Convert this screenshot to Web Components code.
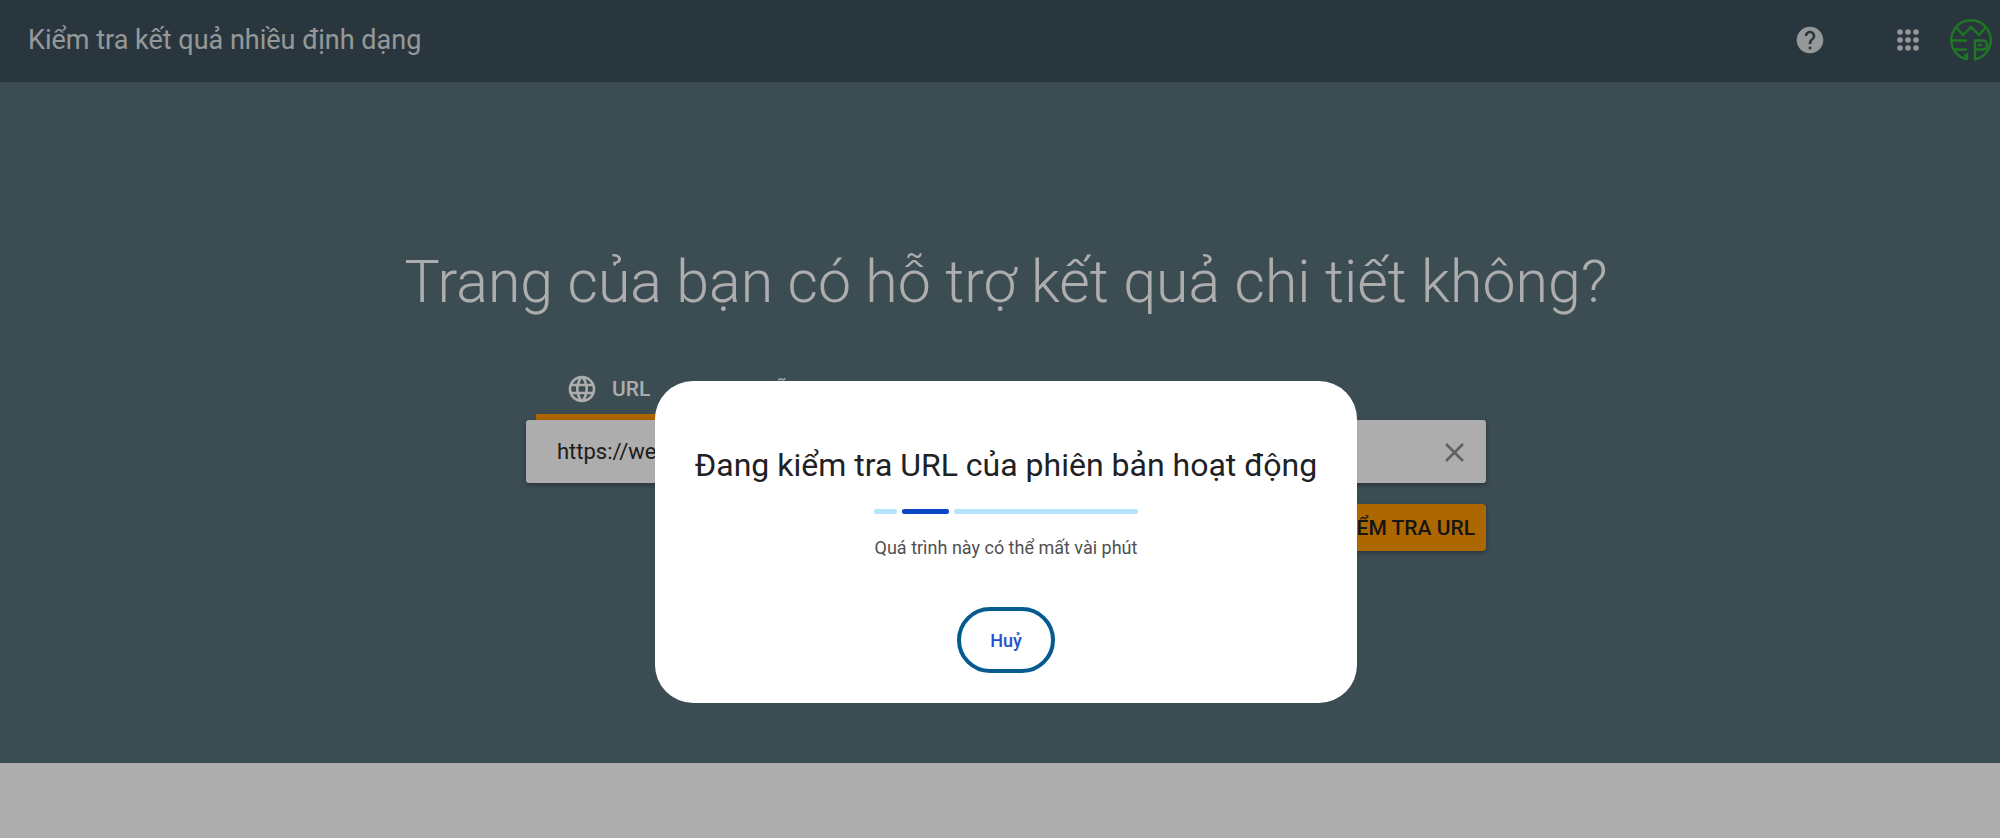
<!DOCTYPE html>
<html lang="vi">
<head>
<meta charset="utf-8">
<title>Kiểm tra kết quả nhiều định dạng</title>
<style>
    html, body {
        margin: 0;
        min-height: 100%;
    }

    body {
        background: #fff;
        font-family: Roboto, "Noto Sans", sans-serif;
    }
</style>
</head>
<body>

<test-page>
    <app-header slot="header" label="Kiểm tra kết quả nhiều định dạng"></app-header>
    <test-hero slot="hero" label="Trang của bạn có hỗ trợ kết quả chi tiết không?">
        <url-form value="https://webtest.vn"></url-form>
    </test-hero>
    <progress-dialog slot="overlay" label="Đang kiểm tra URL của phiên bản hoạt động">
        Quá trình này có thể mất vài phút
    </progress-dialog>
</test-page>

<script>
function makeTemplate(html) {
    const template = document.createElement('template');
    template.innerHTML = html;
    return template;
}

const templatePage = makeTemplate(`
<style>
    :host {
        display: block;
        position: relative;
        min-height: 100vh;
    }
</style>
<slot name="header"></slot>
<main><slot name="hero"></slot></main>
<slot name="overlay"></slot>
`);

class TestPage extends HTMLElement {
    constructor() {
        super();
        this.attachShadow({mode: 'open'});
        this.shadowRoot.appendChild(templatePage.content.cloneNode(true));
    }
}

const templateHeader = makeTemplate(`
<style>
    :host {
        display: block;
    }

    header {
        display: flex;
        align-items: center;
        height: 82px;
        box-sizing: border-box;
        padding: 0 8px 2px 28px;
        background: #3e505a;
        color: #dce0e2;
    }

    .title {
        flex: 1;
        font-size: 27px;
        line-height: 32px;
    }

    nav {
        display: flex;
        align-items: center;
    }

    button {
        display: flex;
        padding: 0;
        border: 0;
        background: none;
        color: inherit;
        cursor: pointer;
    }

    .help {
        margin-right: 66px;
    }

    .apps {
        margin-right: 26px;
    }
</style>
<header>
    <span class="title"></span>
    <nav>
        <button class="help" aria-label="Trợ giúp">
            <svg width="32" height="32" viewBox="0 0 24 24" fill="currentColor"><path d="M12 2C6.48 2 2 6.48 2 12s4.480 10 10 10 10-4.480 10-10S17.520 2 12 2zm1 17h-2v-2h2v2zm2.070-7.750l-.9.920C13.450 12.900 13 13.500 13 15h-2v-.5c0-1.100.450-2.100 1.170-2.830l1.240-1.260c.370-.360.590-.860.590-1.410 0-1.100-.9-2-2-2s-2 .9-2 2H8c0-2.210 1.790-4 4-4s4 1.790 4 4c0 .880-.360 1.680-.930 2.250z"/></svg>
        </button>
        <button class="apps" aria-label="Ứng dụng">
            <svg width="32" height="32" viewBox="0 0 32 32" fill="currentColor">
                <circle cx="8" cy="8" r="2.8"/><circle cx="16" cy="8" r="2.8"/><circle cx="24" cy="8" r="2.8"/>
                <circle cx="8" cy="16" r="2.8"/><circle cx="16" cy="16" r="2.8"/><circle cx="24" cy="16" r="2.8"/>
                <circle cx="8" cy="24" r="2.8"/><circle cx="16" cy="24" r="2.8"/><circle cx="24" cy="24" r="2.8"/>
            </svg>
        </button>
        <button class="account" aria-label="Tài khoản">
            <svg width="42" height="42" viewBox="0 0 42 42" fill="none" stroke="#2fae35" stroke-width="2.4">
                <path d="M17 40.300A19.700 19.700 0 1 1 25 40.300"/>
                <path d="M6 8l7 8 8-8 8 8 7-8"/>
                <path d="M2 21.500h15M3 30.500h14M17 34v7M14 37h3"/>
                <path d="M25 41.500V21.500h8q4 0 4 4.500t-4 4.500h-8M28 26h4"/>
            </svg>
        </button>
    </nav>
</header>
`);

class AppHeader extends HTMLElement {
    constructor() {
        super();
        this.attachShadow({mode: 'open'});
        this.shadowRoot.appendChild(templateHeader.content.cloneNode(true));
        this.titleEl = this.shadowRoot.querySelector('.title');
    }

    connectedCallback() {
        this.titleEl.textContent = this.getAttribute('label');
    }
}

const templateHero = makeTemplate(`
<style>
    :host {
        display: block;
    }

    section {
        display: flex;
        flex-direction: column;
        align-items: center;
        padding: 164px 0 212px 12px;
        background: #58707b;
    }

    h1 {
        margin: 0 0 48px;
        color: #fff;
        font-size: 59px;
        font-weight: 300;
        line-height: 72px;
    }
</style>
<section>
    <h1></h1>
    <slot></slot>
</section>
`);

class TestHero extends HTMLElement {
    constructor() {
        super();
        this.attachShadow({mode: 'open'});
        this.shadowRoot.appendChild(templateHero.content.cloneNode(true));
        this.heading = this.shadowRoot.querySelector('h1');
    }

    connectedCallback() {
        this.heading.textContent = this.getAttribute('label');
    }
}

const templateForm = makeTemplate(`
<style>
    :host {
        display: block;
        width: 48vw;
        min-width: 600px;
    }

    form {
        display: flex;
        flex-direction: column;
    }

    button {
        border: 0;
        font-family: inherit;
        cursor: pointer;
    }

    .tabs {
        display: flex;
        padding-left: 10px;
    }

    .tab {
        display: flex;
        align-items: center;
        gap: 14px;
        height: 54px;
        padding: 0 30px 3px;
        border-bottom: 6px solid transparent;
        background: none;
        color: #fff;
        font-size: 21px;
        font-weight: 500;
        opacity: 0.9;
    }

    .tab.active {
        border-bottom-color: #ff9800;
        opacity: 1;
    }

    .field {
        display: flex;
        align-items: center;
        height: 63px;
        padding: 0 16px 0 31px;
        border-radius: 3px;
        background: #fff;
        box-shadow: 0 2px 5px rgba(0, 0, 0, 0.3);
    }

    input {
        flex: 1;
        padding: 0;
        border: 0;
        outline: 0;
        background: none;
        color: #2b2b2b;
        font-family: inherit;
        font-size: 22px;
    }

    .clear {
        display: flex;
        padding: 0;
        background: none;
        color: #8e8e8e;
    }

    .submit {
        align-self: flex-end;
        height: 47px;
        margin-top: 21px;
        padding: 0 11px;
        border-radius: 4px;
        background: #ff9800;
        box-shadow: 0 2px 4px rgba(0, 0, 0, 0.3);
        color: #212121;
        font-size: 21px;
        font-weight: 500;
    }
</style>
<form>
    <div class="tabs">
        <button type="button" class="tab active">
            <svg width="32" height="32" viewBox="0 0 24 24" fill="currentColor"><path d="M11.990 2C6.470 2 2 6.480 2 12s4.470 10 9.990 10C17.520 22 22 17.520 22 12S17.520 2 11.990 2zm6.930 6h-2.950c-.320-1.250-.780-2.450-1.380-3.560 1.840.630 3.370 1.910 4.330 3.560zM12 4.040c.830 1.200 1.480 2.530 1.910 3.960h-3.820c.430-1.430 1.080-2.760 1.910-3.960zM4.260 14C4.100 13.360 4 12.690 4 12s.1-1.360.260-2h3.380c-.080.660-.140 1.320-.140 2s.060 1.340.140 2H4.260zm.820 2h2.950c.320 1.250.780 2.450 1.380 3.560-1.840-.630-3.370-1.900-4.330-3.560zm2.950-8H5.080c.960-1.660 2.490-2.930 4.330-3.560C8.810 5.550 8.350 6.750 8.030 8zM12 19.960c-.830-1.200-1.480-2.530-1.910-3.960h3.820c-.430 1.430-1.080 2.760-1.910 3.960zM14.340 14H9.660c-.090-.660-.160-1.320-.160-2s.070-1.350.160-2h4.680c.090.650.160 1.320.160 2s-.070 1.340-.160 2zm.250 5.560c.6-1.110 1.060-2.310 1.380-3.560h2.950c-.960 1.650-2.490 2.930-4.330 3.560zM16.360 14c.080-.660.140-1.320.140-2s-.060-1.340-.140-2h3.380c.160.640.260 1.310.260 2s-.1 1.360-.260 2h-3.380z"/></svg>
            <span>URL</span>
        </button>
        <button type="button" class="tab">
            <svg width="32" height="32" viewBox="0 0 24 24" fill="none" stroke="currentColor" stroke-width="2"><path d="M9 7l-5 5 5 5M15 7l5 5-5 5"/></svg>
            <span>MÃ</span>
        </button>
    </div>
    <div class="field">
        <input type="text" aria-label="URL">
        <button type="button" class="clear" aria-label="Xoá">
            <svg width="32" height="32" viewBox="0 0 32 32" fill="none" stroke="currentColor" stroke-width="2.5"><path d="M8 8l17 17M25 8L8 25"/></svg>
        </button>
    </div>
    <button type="button" class="submit">KIỂM TRA URL</button>
</form>
`);

class UrlForm extends HTMLElement {
    constructor() {
        super();
        this.attachShadow({mode: 'open'});
        this.shadowRoot.appendChild(templateForm.content.cloneNode(true));

        this.input = this.shadowRoot.querySelector('input');
        this.tabs = this.shadowRoot.querySelectorAll('.tab');
    }

    connectedCallback() {
        this.input.value = this.getAttribute('value') || '';
        this.shadowRoot.querySelector('.clear').addEventListener('click', () => {
            this.input.value = '';
        });
        this.tabs.forEach(tab => tab.addEventListener('click', () => this.selectTab(tab)));
    }

    selectTab(tab) {
        this.tabs.forEach(t => t.classList.toggle('active', t === tab));
    }
}

const templateDialog = makeTemplate(`
<style>
    :host {
        display: flex;
        justify-content: center;
        align-items: flex-start;
        position: absolute;
        inset: 0;
        box-sizing: border-box;
        padding: 381px 0 0 12px;
        background: rgba(0, 0, 0, 0.32);
    }

    :host([hidden]) {
        display: none;
    }

    dialog {
        position: static;
        display: flex;
        flex-direction: column;
        align-items: center;
        margin: 0;
        padding: 64px 40px 30px;
        border: 0;
        border-radius: 38px;
        background: #fff;
        color: #202124;
    }

    h2 {
        margin: 0 0 24px;
        font-size: 32px;
        font-weight: 400;
        line-height: 40px;
    }

    .bar {
        display: flex;
        gap: 5px;
        width: 264px;
        height: 5px;
    }

    .bar span {
        border-radius: 2px;
        background: #b8e3fc;
    }

    .bar .before {
        width: 23px;
    }

    .bar .current {
        width: 47px;
        background: #0b47c4;
    }

    .bar .after {
        flex: 1;
    }

    p {
        margin: 22px 0 47px;
        color: #505050;
        font-size: 18px;
        line-height: 24px;
    }

    button {
        width: 98px;
        height: 66px;
        border: 4px solid #055a8f;
        border-radius: 33px;
        background: #fff;
        color: #2450d3;
        font-family: inherit;
        font-size: 18px;
        font-weight: 500;
        cursor: pointer;
    }
</style>
<dialog open aria-labelledby="title">
    <h2 id="title"></h2>
    <div class="bar" role="progressbar" aria-labelledby="title">
        <span class="before"></span><span class="current"></span><span class="after"></span>
    </div>
    <p><slot></slot></p>
    <button type="button">Huỷ</button>
</dialog>
`);

class ProgressDialog extends HTMLElement {
    constructor() {
        super();
        this.attachShadow({mode: 'open'});
        this.shadowRoot.appendChild(templateDialog.content.cloneNode(true));

        this.heading = this.shadowRoot.querySelector('h2');
        this.cancel = this.shadowRoot.querySelector('button');
        this.close = this.close.bind(this);
    }

    connectedCallback() {
        this.heading.textContent = this.getAttribute('label');
        this.cancel.addEventListener('click', this.close);
    }

    close() {
        this.hidden = true;
    }
}

customElements.define('test-page', TestPage);
customElements.define('app-header', AppHeader);
customElements.define('test-hero', TestHero);
customElements.define('url-form', UrlForm);
customElements.define('progress-dialog', ProgressDialog);
</script>
</body>
</html>
